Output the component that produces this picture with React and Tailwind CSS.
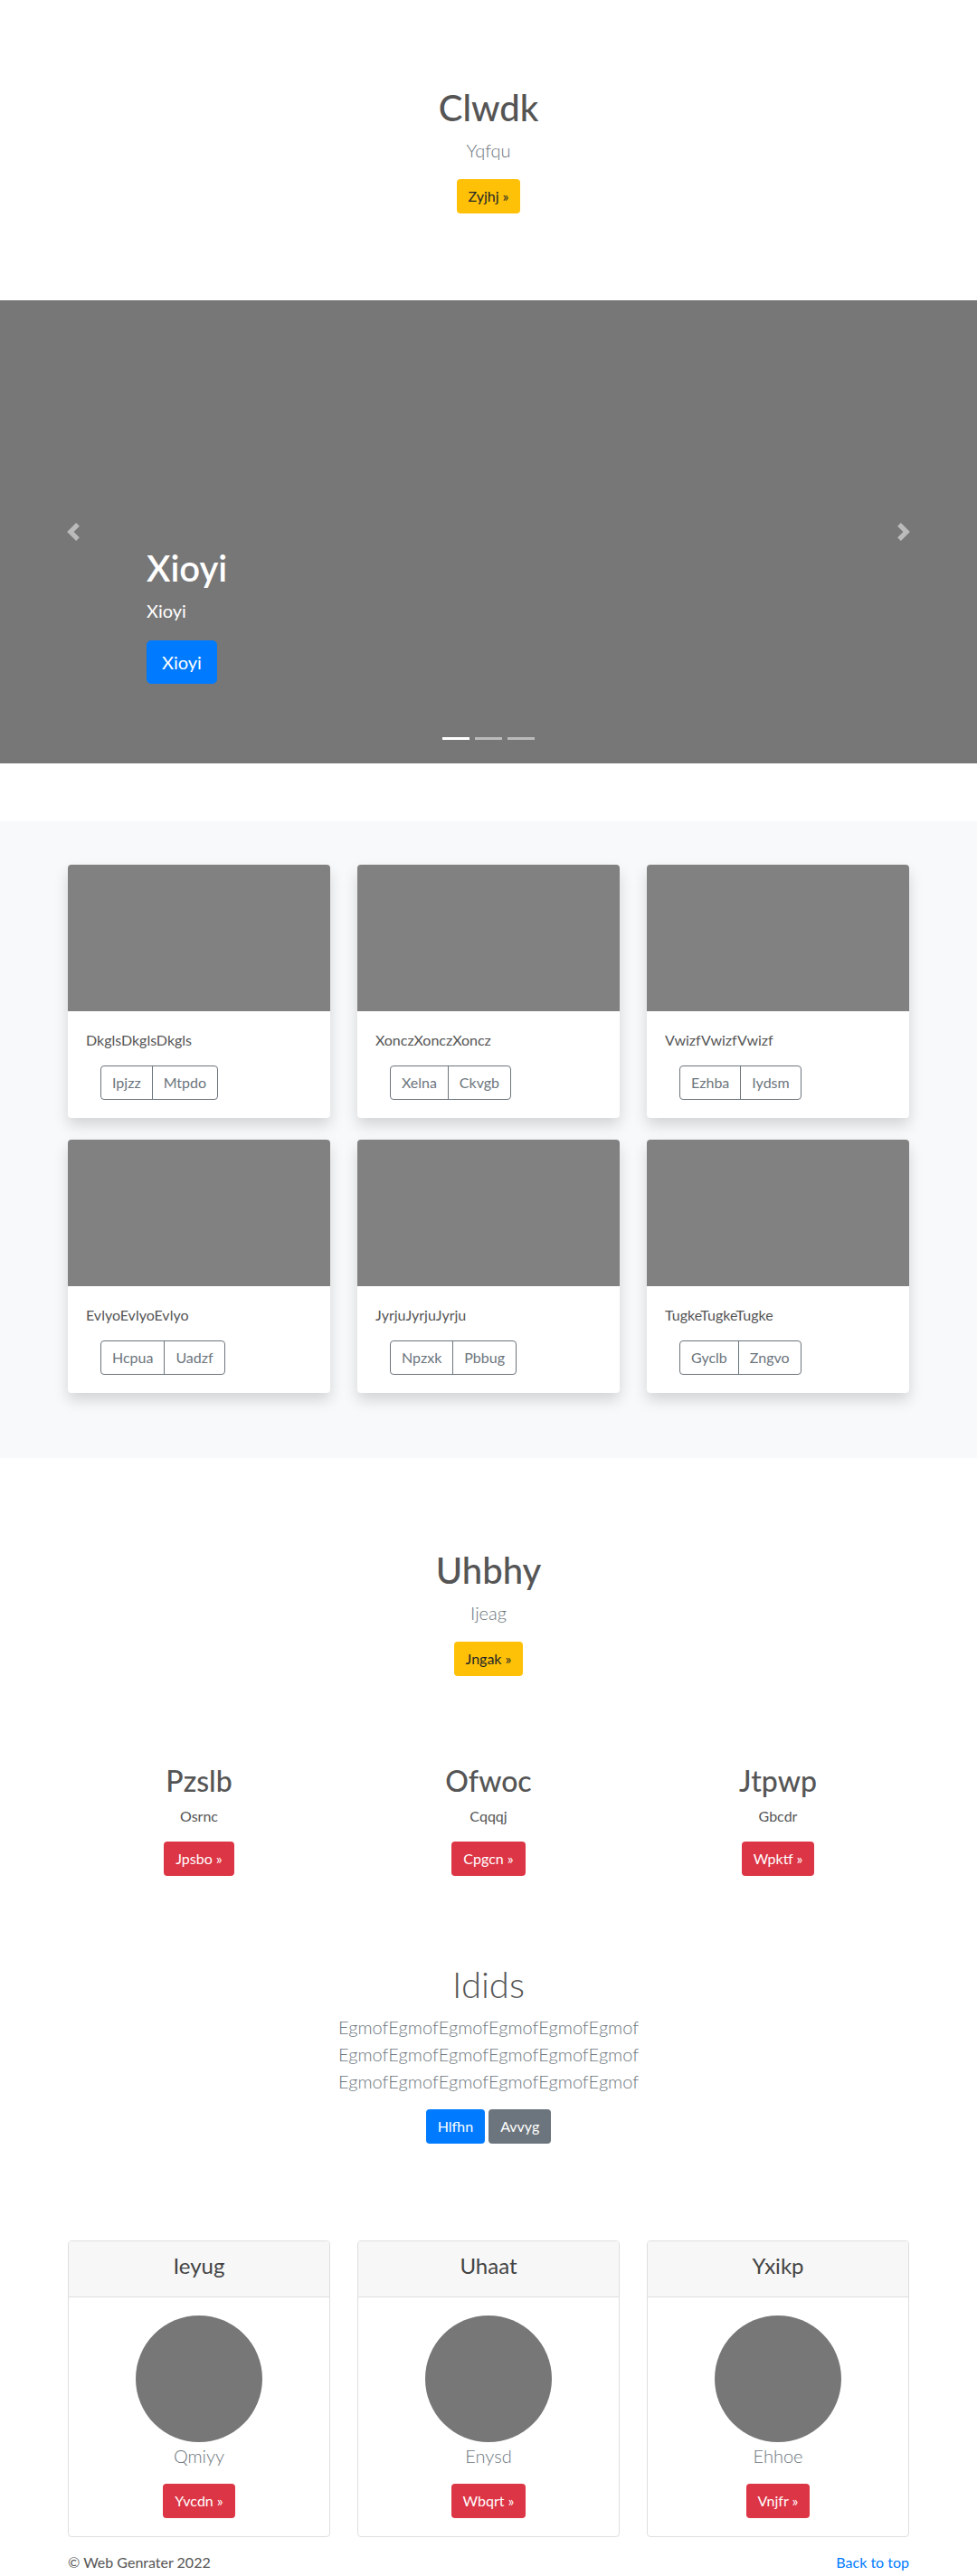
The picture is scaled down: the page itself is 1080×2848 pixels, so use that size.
import React from "react";

const albumCards = [
  { text: "DkglsDkglsDkgls", a: "Ipjzz", b: "Mtpdo" },
  { text: "XonczXonczXoncz", a: "Xelna", b: "Ckvgb" },
  { text: "VwizfVwizfVwizf", a: "Ezhba", b: "Iydsm" },
  { text: "EvlyoEvlyoEvlyo", a: "Hcpua", b: "Uadzf" },
  { text: "JyrjuJyrjuJyrju", a: "Npzxk", b: "Pbbug" },
  { text: "TugkeTugkeTugke", a: "Gyclb", b: "Zngvo" },
];

const columns = [
  { title: "Pzslb", text: "Osrnc", btn: "Jpsbo »" },
  { title: "Ofwoc", text: "Cqqqj", btn: "Cpgcn »" },
  { title: "Jtpwp", text: "Gbcdr", btn: "Wpktf »" },
];

const people = [
  { head: "Ieyug", name: "Qmiyy", btn: "Yvcdn »" },
  { head: "Uhaat", name: "Enysd", btn: "Wbqrt »" },
  { head: "Yxikp", name: "Ehhoe", btn: "Vnjfr »" },
];

const Chevron = ({ next }) => (
  <svg width="20" height="20" viewBox="0 0 8 8" fill="#fff">
    {next ? (
      <path d="M2.75 0l-1.5 1.5L3.75 4l-2.5 2.5L2.75 8l4-4-4-4z" />
    ) : (
      <path d="M5.25 0l-4 4 4 4 1.5-1.5L4.25 4l2.5-2.5L5.25 0z" />
    )}
  </svg>
);

const Btn = ({ children, className }) => (
  <a
    href="#"
    className={
      "inline-block px-3 py-[6px] text-[16px] leading-[24px] border border-transparent rounded-[4px] " +
      className
    }
  >
    {children}
  </a>
);

const Hero = ({ title, sub, btn, top }) => (
  <section className={"text-center pb-[96px] " + top}>
    <h1 className="text-[40px] leading-[48px] font-medium mb-2">{title}</h1>
    <p className="text-[20px] leading-[30px] font-light text-[#6c757d] mb-[17px]">{sub}</p>
    <Btn className="bg-[#ffc107] text-[#212529]">{btn}</Btn>
  </section>
);

export default function App() {
  return (
    <div className="bg-white text-[#555] text-[16px] leading-[24px]" style={{ fontFamily: "Lato, 'Liberation Sans', sans-serif" }}>
      <Hero title="Clwdk" sub="Yqfqu" btn="Zyjhj »" top="pt-[95px]" />

      {/* carousel */}
      <div className="flex h-[512px] bg-[#777]">
        <div className="w-[15%] flex items-center justify-center opacity-50">
          <Chevron />
        </div>
        <div className="flex-1 flex flex-col justify-end text-white">
          <div>
            <h1 className="text-[40px] leading-[48px] font-semibold mb-2">Xioyi</h1>
            <p className="text-[20px] leading-[30px] mb-[18px]">Xioyi</p>
            <a href="#" className="inline-block px-4 py-2 text-[20px] leading-[30px] rounded-[5px] bg-[#007bff] text-white border border-[#007bff]">
              Xioyi
            </a>
          </div>
          <div className="flex justify-center gap-[6px] mt-[59px] mb-[26px]">
            <span className="w-[30px] h-[3px] bg-white" />
            <span className="w-[30px] h-[3px] bg-white opacity-50" />
            <span className="w-[30px] h-[3px] bg-white opacity-50" />
          </div>
        </div>
        <div className="w-[15%] flex items-center justify-center opacity-50">
          <Chevron next />
        </div>
      </div>

      {/* album */}
      <section className="mt-[64px] bg-[#f8f9fa] pt-[48px] pb-[72px]">
        <div className="max-w-[960px] mx-auto px-[15px] grid grid-cols-3 gap-x-[30px] gap-y-[24px]">
          {albumCards.map((c) => (
            <div key={c.text} className="bg-white rounded-[4px] overflow-hidden shadow-[0_8px_16px_rgba(0,0,0,0.15)]">
              <div className="h-[162px] bg-[#818181]" />
              <div className="p-5">
                <p className="mb-4">{c.text}</p>
                <div className="ml-4 inline-flex border border-[#6c757d] rounded-[4px] text-[#6c757d] divide-x divide-[#6c757d]">
                  <span className="px-3 py-[6px] leading-[24px]">{c.a}</span>
                  <span className="px-3 py-[6px] leading-[24px]">{c.b}</span>
                </div>
              </div>
            </div>
          ))}
        </div>
      </section>

      <Hero title="Uhbhy" sub="Ijeag" btn="Jngak »" top="pt-[100px]" />

      {/* three columns */}
      <div className="max-w-[960px] mx-auto px-[15px] grid grid-cols-3 gap-x-[30px] text-center mt-[1px]">
        {columns.map((c) => (
          <div key={c.title}>
            <h2 className="text-[32px] leading-[38.4px] font-medium mb-2">{c.title}</h2>
            <p className="mb-4">{c.text}</p>
            <Btn className="bg-[#dc3545] text-white">{c.btn}</Btn>
          </div>
        ))}
      </div>

      {/* jumbotron */}
      <section className="text-center pt-[96px] pb-[87px]">
        <div className="w-[450px] mx-auto">
          <h1 className="text-[40px] leading-[48px] font-light mb-2">Idids</h1>
          <p className="text-[20px] leading-[30px] font-light text-[#6c757d] mb-4">
            EgmofEgmofEgmofEgmofEgmofEgmof EgmofEgmofEgmofEgmofEgmofEgmof EgmofEgmofEgmofEgmofEgmofEgmof
          </p>
          <div className="flex justify-center gap-[4px] mt-[12px] mb-[8px]">
            <Btn className="bg-[#007bff] text-white">Hlfhn</Btn>
            <Btn className="bg-[#6c757d] text-white">Avvyg</Btn>
          </div>
          <div className="h-[12px]" />
        </div>
      </section>

      {/* people cards */}
      <div className="max-w-[960px] mx-auto px-[15px]">
        <div className="grid grid-cols-3 gap-x-[30px] mb-4">
          {people.map((p) => (
            <div key={p.head} className="border border-[#dfdfdf] rounded-[4px] text-center overflow-hidden">
              <div className="bg-[#f7f7f7] border-b border-[#dfdfdf] px-5 pt-3 pb-3">
                <h4 className="text-[24px] leading-[29px] mb-2 text-[#444]">{p.head}</h4>
              </div>
              <div className="px-5 pt-5 pb-5">
                <div className="mx-auto w-[140px] h-[140px] rounded-full bg-[#777]" />
                <p className="text-[20px] leading-[30px] font-light text-[#6c757d] mb-4">{p.name}</p>
                <Btn className="bg-[#dc3545] text-white">{p.btn}</Btn>
              </div>
            </div>
          ))}
        </div>
        <footer className="flex justify-between">
          <p>© Web Genrater 2022</p>
          <a href="#" className="text-[#007bff]">Back to top</a>
        </footer>
      </div>
    </div>
  );
}
